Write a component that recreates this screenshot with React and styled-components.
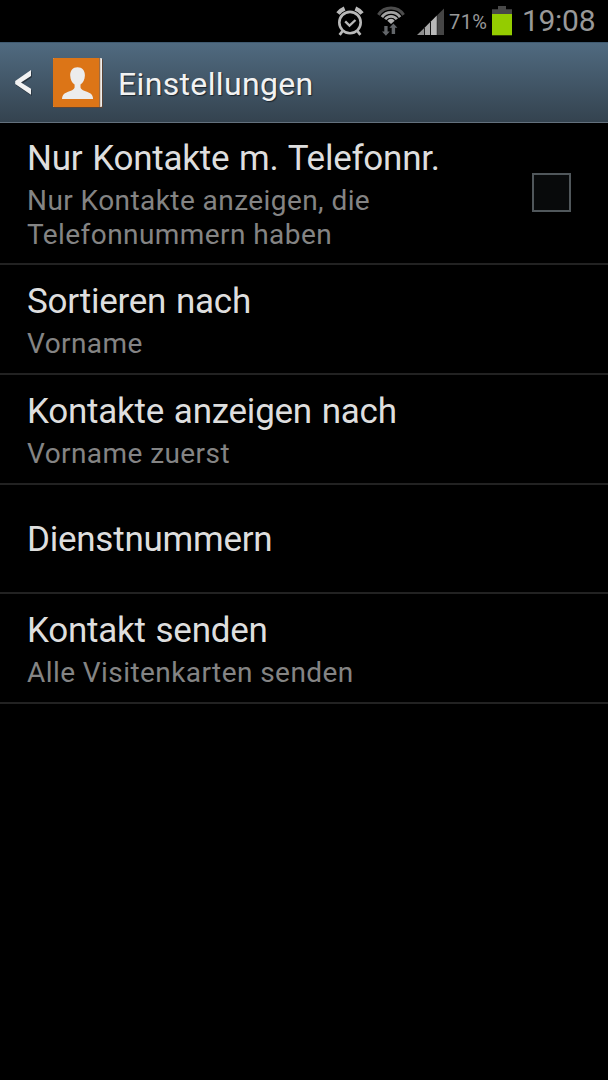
import React, { useState } from 'react';
import styled, { createGlobalStyle } from 'styled-components';

const settings = [
    { title: 'Nur Kontakte m. Telefonnr.', text: 'Nur Kontakte anzeigen, die Telefonnummern haben', checkbox: true, height: 142 },
    { title: 'Sortieren nach', text: 'Vorname', height: 110 },
    { title: 'Kontakte anzeigen nach', text: 'Vorname zuerst', height: 110 },
    { title: 'Dienstnummern', height: 109 },
    { title: 'Kontakt senden', text: 'Alle Visitenkarten senden', height: 110 },
];

const AlarmIcon = () => (
    <svg width="28" height="30" viewBox="0 0 28 30" fill="none" stroke="#b9b9b9">
        <circle cx="14" cy="16.600" r="10.700" strokeWidth="2.600" />
        <path d="M9.200 15.400l4.300 4.200 6-5.600" strokeWidth="2.300" />
        <path d="M2 7.600A16 16 0 0 1 8.600 2.500" strokeWidth="4.200" />
        <path d="M26 7.600A16 16 0 0 0 19.400 2.500" strokeWidth="4.200" />
        <path d="M6.600 25l-3 3.800M21.400 25l3 3.800" strokeWidth="2.800" />
    </svg>
);

const WifiIcon = () => (
    <svg width="28" height="30" viewBox="0 0 28 30" fill="none">
        <path d="M1.400 8.800a15.200 15.200 0 0 1 25.200 0" stroke="#4c4c4c" strokeWidth="3" />
        <path d="M4.900 11.100a11.100 11.100 0 0 1 18.200 0" stroke="#a2a2a2" strokeWidth="2.900" />
        <path d="M8.200 13.300a7.100 7.100 0 0 1 11.600 0" stroke="#aaa" strokeWidth="2.800" />
        <path d="M10.300 14.700a4.600 4.600 0 0 1 7.400 0L14 18z" fill="#b0b0b0" />
        <path d="M7.300 20v5.500H5l3.900 4.200 3.900-4.200h-2.200V20zM14.700 28v-6.200h-2.300l4-4.200 4 4.200h-2.300V28z" fill="#63666a" />
    </svg>
);

const SignalIcon = () => (
    <svg width="28" height="28" viewBox="0 0 28 28">
        <path d="M0 27L7 20.2V27z" fill="#8f8f8f" />
        <path d="M7.800 19.400L13 14.300V27H7.800z" fill="#a8a8a8" />
        <path d="M13.900 13.400L19.800 7.600V27h-5.900z" fill="#b8b8b8" />
        <path d="M20.200 7.200L27 .5V27h-6.800z" fill="#454545" />
    </svg>
);

const BatteryIcon = () => (
    <svg width="20" height="30" viewBox="0 0 20 30">
        <path d="M0 3.3h6V0h8v3.3h6V8H0z" fill="#484848" />
        <path d="M0 8h20v21.3H0z" fill="#94cc00" />
    </svg>
);

const BackIcon = () => (
    <svg width="18" height="28" viewBox="0 0 18 28">
        <path d="M16.8 2.2v6L7 14.7l9.8 6.2v6L1 16.2v-2.9z" fill="#27323c" />
        <path d="M16 1v6L6 13.5l10 6.2v6L.2 15v-2.9z" fill="#f2f2f2" />
    </svg>
);

const ContactIcon = () => (
    <svg width="50" height="50" viewBox="0 0 50 50">
        <rect x="1" y="1" width="49" height="49" rx="1" fill="#5a4538" />
        <rect width="49" height="49" rx="1" fill="#eee" />
        <path d="M1 0h45v49H1a1 1 0 0 1-1-1V1a1 1 0 0 1 1-1z" fill="#dc7517" />
        <path d="M46.2 0h1v49h-1z" fill="#8d4b16" />
        <path d="M24.5 9.200c4.700 0 7.600 3.500 7.400 8.300-.2 4.200-1.800 7.200-4.400 9v2.800c0 2.200 4 3.800 8 5.100 3.200 1 4.600 3.500 4.600 6.600H9c0-3.100 1.400-5.600 4.600-6.600 4-1.300 8-2.900 8-5.100v-2.800c-2.700-1.800-4.200-4.800-4.400-9-.2-4.800 2.700-8.300 7.300-8.300z" fill="#ececec" />
    </svg>
);

const App = () => {
    const [checked, setChecked] = useState(false);

    return (
        <Wrapper>
            <GlobalStyle />
            <StatusBar>
                <AlarmIcon />
                <WifiIcon />
                <SignalIcon />
                <Percent>71%</Percent>
                <BatteryIcon />
                <Clock>19:08</Clock>
            </StatusBar>

            <Header>
                <BackIcon />
                <ContactIcon />
                <HeaderTitle>Einstellungen</HeaderTitle>
            </Header>

            <List>
                {settings.map((item) => (
                    <Row key={item.title} $height={item.height}>
                        <RowBody>
                            <RowTitle>{item.title}</RowTitle>
                            {item.text && <RowText>{item.text}</RowText>}
                        </RowBody>
                        {item.checkbox && (
                            <Checkbox
                                type="checkbox"
                                checked={checked}
                                onChange={() => setChecked(!checked)}
                            />
                        )}
                    </Row>
                ))}
            </List>
        </Wrapper>
    )
}

const GlobalStyle = createGlobalStyle`
    body {
        margin: 0;
        background: #000;
    }

    * {
        box-sizing: border-box;
    }

    svg {
        display: block;
        flex-shrink: 0;
    }
`

const Wrapper = styled.div`
    width: 608px;
    height: 1080px;
    overflow: hidden;
    background: #000;
    font-family: Roboto, "Noto Sans", sans-serif;
`

const StatusBar = styled.div`
    display: flex;
    justify-content: flex-end;
    align-items: flex-start;
    height: 42px;
    padding: 6px 13px 0 0;

    svg:nth-of-type(2) {
        margin-left: 13px;
    }

    svg:nth-of-type(3) {
        margin: 2px 0 0 12px;
    }
`

const Percent = styled.span`
    width: 38px;
    margin: 4px 5px 0 4px;
    font-size: 20px;
    line-height: 24px;
    letter-spacing: 0.4px;
    color: #999;
    white-space: nowrap;
`

const Clock = styled.span`
    width: 73px;
    margin-left: 10px;
    font-size: 30px;
    line-height: 30px;
    letter-spacing: -0.3px;
    color: #999;
    white-space: nowrap;
`

const Header = styled.header`
    display: flex;
    align-items: center;
    height: 81px;
    padding-left: 15px;
    border-top: 1px solid #3f5a70;
    border-bottom: 1px solid #64717d;
    background: linear-gradient(#506a80, #34434f);

    svg + svg {
        margin-left: 20px;
    }
`

const HeaderTitle = styled.h1`
    margin: 2px 0 0 15px;
    font-size: 32px;
    font-weight: 400;
    line-height: 40px;
    letter-spacing: 0.35px;
    color: #f2f2f2;
    text-shadow: 1px 1px 1px #1c262e;
`

const List = styled.div`
    display: flex;
    flex-direction: column;
`

const Row = styled.div`
    display: flex;
    align-items: center;
    justify-content: space-between;
    height: ${(props) => props.$height}px;
    padding: 0 37px 0 27px;
    border-bottom: 2px solid #222;
`

const RowBody = styled.div`
    width: 420px;
    padding-top: 3px;
`

const RowTitle = styled.div`
    font-size: 35px;
    line-height: 44px;
    letter-spacing: -0.25px;
    word-spacing: 1.4px;
    color: #dedede;
    white-space: nowrap;
`

const RowText = styled.div`
    width: 380px;
    margin-top: 3px;
    font-size: 28px;
    line-height: 34px;
    letter-spacing: 0.43px;
    color: #848484;
`

const Checkbox = styled.input`
    appearance: none;
    width: 39px;
    height: 39px;
    margin: 0 0 2px;
    border: 2px solid #50575b;
    background: #080a0b;

    &:checked {
        background: #6a9a1f;
    }
`

export default App;
